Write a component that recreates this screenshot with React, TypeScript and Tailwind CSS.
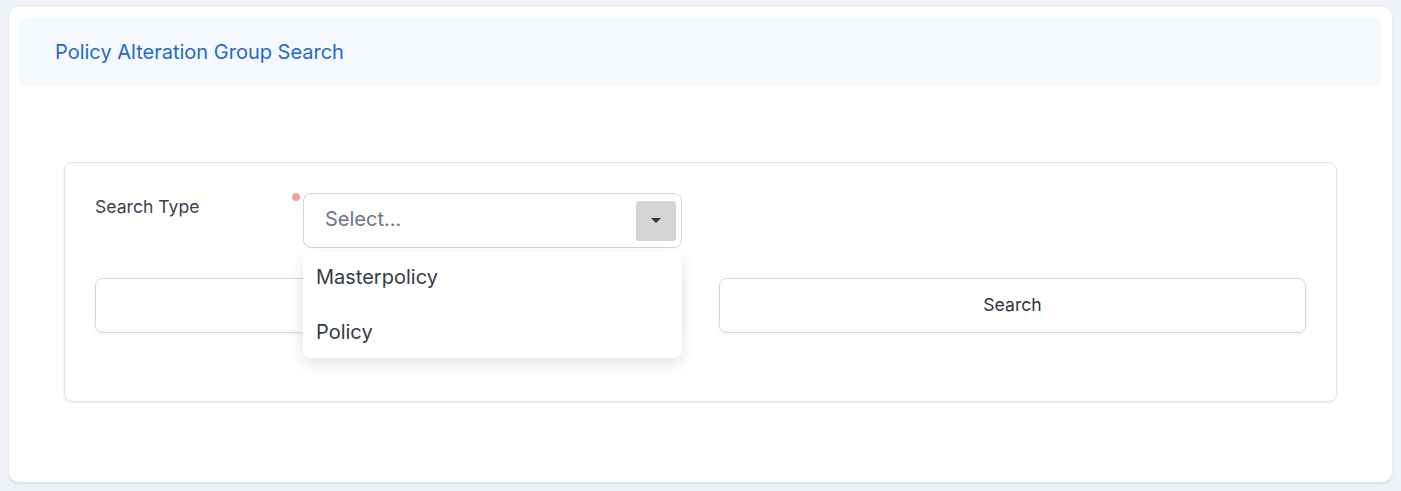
import React from "react";

export default function App() {
  return (
    <div className="min-h-[491px] w-full bg-[#eef1f5] pt-[7px] pl-[9px] pr-[9px] pb-[9px]" style={{ fontFamily: "Inter, 'Noto Sans', sans-serif" }}>
      <div className="h-[475px] rounded-[10px] bg-white p-[10px] shadow-[0_2px_3px_rgba(0,0,0,0.08)]">
        <div className="flex h-[69px] items-center rounded-[10px] bg-[#f5f9fd] pl-[36px]">
          <h1 className="text-[20px] font-normal text-[#2469cf]">Policy Alteration Group Search</h1>
        </div>
        <div className="mx-[45px] mt-[76px] h-[240px] rounded-[8px] border border-[#e1e5ea] bg-white px-[30px] pt-[30px] shadow-[0_1px_3px_rgba(0,0,0,0.08)]">
          <div className="flex items-start">
            <div className="w-[197px] pt-[1px] text-[17.6px] text-[#374151]">Search Type</div>
            <div className="mr-[3px] mt-[0px] h-[8px] w-[8px] rounded-full bg-[#f8a19a]" />
            <div className="relative">
              <div className="flex h-[55px] w-[379px] items-center justify-between rounded-[8px] border border-[#ced3de] bg-white pl-[21px] pr-[5px]">
                <span className="pb-[3px] text-[20px] text-[#6b7588]">Select...</span>
                <div className="flex h-[40px] w-[40px] items-center justify-center rounded-[3px] bg-[#d4d4d4]">
                  <svg width="10" height="6" viewBox="0 0 10 6">
                    <path d="M0 0 L10 0 L5 5 Z" fill="#333" />
                  </svg>
                </div>
              </div>
              <div className="absolute left-0 top-[59px] z-10 w-[379px] rounded-[8px] bg-white shadow-[0_6px_16px_rgba(0,0,0,0.12)]">
                <div className="flex h-[50px] items-center pl-[13px] text-[20px] text-[#343b47]">Masterpolicy</div>
                <div className="flex h-[56px] items-center pl-[13px] pt-[4px] text-[20px] text-[#343b47]">Policy</div>
              </div>
            </div>
          </div>
          <div className="mt-[30px] grid grid-cols-2 gap-[37px]">
            <button className="h-[55px] rounded-[8px] border border-[#d3d7e0] bg-white shadow-[0_2px_4px_rgba(0,0,0,0.06)]" />
            <button className="h-[55px] rounded-[8px] border border-[#d3d7e0] bg-white text-[17.6px] text-[#2d3440] shadow-[0_2px_4px_rgba(0,0,0,0.06)]">
              Search
            </button>
          </div>
        </div>
      </div>
    </div>
  );
}
